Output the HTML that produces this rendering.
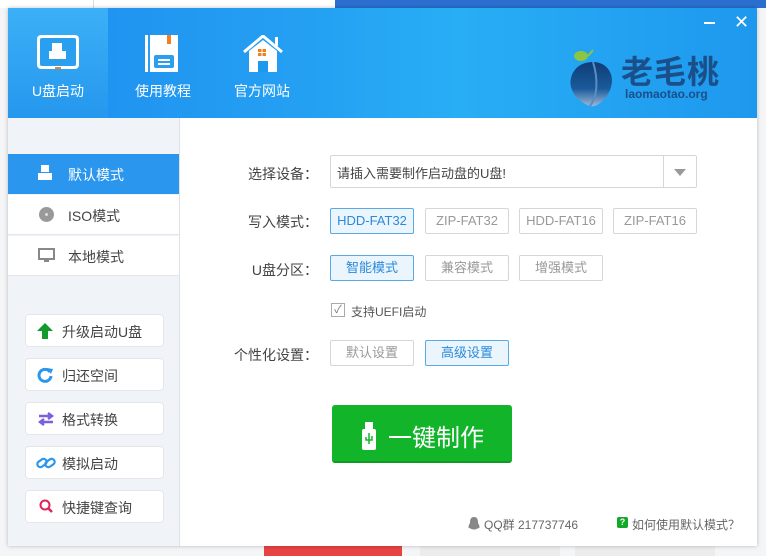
<!DOCTYPE html>
<html><head><meta charset="utf-8"><style>
*{margin:0;padding:0;box-sizing:border-box}
body{width:766px;height:556px;overflow:hidden;background:#f4f5f7;font-family:"Liberation Sans","Noto Sans CJK SC",sans-serif;position:relative;color:#333}
.abs{position:absolute}
#win{left:8px;top:8px;width:749px;height:538px;background:#fff;box-shadow:0 0 4px rgba(0,0,0,.25)}
#hdr{left:0;top:0;width:749px;height:110px;background:linear-gradient(90deg,#1e8ef0 0%,#24a0f2 40%,#28aef5 60%,#1e98ee 100%)}
.tab{top:0;width:100px;height:110px;color:#fff;font-size:14px;text-align:center}
.tab span{position:absolute;left:0;width:100%;top:73px}
#side{left:0;top:110px;width:172px;height:428px;background:#f0f3f7;border-right:1px solid #dde2e8}
.mi{left:0;width:171px;height:40px;background:#fff;font-size:14px;color:#444;border-bottom:1px solid #e3e6ea}
.mi span{position:absolute;left:60px;top:11px}
.ab{left:17px;width:139px;height:33px;background:#fff;border:1px solid #e3e7ec;border-radius:4px;font-size:14px;color:#444}
.ab span{position:absolute;left:36px;top:7px}
.lbl{font-size:14px;color:#444;text-align:right;width:100px}
.btn{height:26px;width:84px;border:1px solid #d3d7dc;border-radius:2px;font-size:13px;color:#999;text-align:center;line-height:24px;background:#fff}
.sel{border-color:#5aaae6;background:#eaf5fd;color:#2b8ad8}
</style></head><body>
<div class="abs" style="left:0;top:0;width:766px;height:8px;background:#fff"></div>
<div class="abs" style="left:93px;top:0;width:1px;height:8px;background:#ddd"></div>
<div class="abs" style="left:335px;top:0;width:431px;height:8px;background:#2a6fd0"></div>
<div class="abs" style="left:264px;top:546px;width:138px;height:10px;background:#e84343"></div>
<div class="abs" style="left:420px;top:546px;width:140px;height:10px;background:#ececec"></div>
<div class="abs" style="left:575px;top:546px;width:140px;height:10px;background:#ececec"></div>
<div id="win" class="abs">
 <div id="hdr" class="abs">
  <div class="tab abs" style="left:0;background:linear-gradient(180deg,#3cb0f6,#2597ee)">
   <svg class="abs" style="left:28px;top:26px" width="44" height="38" viewBox="0 0 44 38"><rect x="1" y="1" width="42" height="34" rx="4" fill="#fff"/><rect x="4" y="4" width="36" height="28" rx="2" fill="#2a9ff0"/><rect x="16" y="9" width="10" height="8" fill="#fff"/><rect x="13" y="17" width="17" height="8" fill="#fff"/><rect x="19" y="33" width="6" height="2" fill="#f08020"/></svg>
   <span>U盘启动</span></div>
  <div class="tab abs" style="left:105px">
   <svg class="abs" style="left:32px;top:27px" width="34" height="38" viewBox="0 0 34 38"><rect x="0" y="0" width="33" height="37" fill="#fff"/><rect x="3" y="0" width="2" height="37" fill="#2a9ff0"/><rect x="22" y="0" width="4" height="9" fill="#f08020"/><rect x="9" y="20" width="20" height="13" rx="2" fill="#2a9ff0"/><rect x="13" y="24" width="12" height="2" fill="#fff"/><rect x="13" y="28" width="12" height="2" fill="#fff"/></svg>
   <span>使用教程</span></div>
  <div class="tab abs" style="left:204px">
   <svg class="abs" style="left:30px;top:27px" width="42" height="38" viewBox="0 0 42 38"><path d="M2 17 L21 1 L40 17" stroke="#fff" stroke-width="3" fill="none"/><rect x="33" y="2" width="3" height="9" fill="#fff"/><path d="M7 16 L21 5 L35 16 V37 H7Z" fill="#fff"/><rect x="16" y="26" width="10" height="11" fill="#1e98ee"/><rect x="16" y="14" width="8" height="7" fill="#f08020"/><path d="M20 14V21M16 17.5H24" stroke="#fff"/></svg>
   <span>官方网站</span></div>
  <div class="abs" style="left:696px;top:14px;width:11px;height:2px;background:#fff"></div>
  <div class="abs" style="left:726px;top:4px;color:#fff;font-size:18px">✕</div>
  <svg class="abs" style="left:560px;top:40px" width="50" height="62" viewBox="0 0 50 62"><defs><linearGradient id="g" x1="0" y1="0" x2="0" y2="1"><stop offset="0" stop-color="#0e3d78"/><stop offset=".6" stop-color="#1a5a9a"/><stop offset="1" stop-color="#9cb8d8"/></linearGradient></defs><ellipse cx="13" cy="8" rx="7" ry="5" fill="#8cc63f"/><path d="M20 8 L25 2" stroke="#8cc63f" stroke-width="2"/><path d="M25 14 C40 14 48 28 42 42 C38 52 28 60 22 58 C10 54 0 42 3 30 C6 18 16 14 25 14Z" fill="url(#g)"/><path d="M22 58 C30 48 30 30 25 14" stroke="#5b8dc0" stroke-width="2" fill="none"/></svg>
  <div class="abs" style="left:613px;top:47px;color:#1a4f8a;font-size:32px;line-height:34px;font-weight:bold;letter-spacing:1px">老毛桃</div>
  <div class="abs" style="left:617px;top:80px;color:#1a4f8a;font-size:12px;line-height:13px;font-weight:bold">laomaotao.org</div>
 </div>
 <div id="side" class="abs">
  <div class="mi abs" style="top:36px;background:#2a96ee;color:#fff;border:none"><svg class="abs" style="left:29px;top:11px" width="16" height="16"><rect x="4" y="0" width="8" height="7" fill="#fff"/><rect x="1" y="8" width="14" height="7" fill="#fff"/></svg><span>默认模式</span></div>
  <div class="abs" style="left:166px;top:50px;width:0;height:0;border:6px solid transparent;border-right-color:#fff"></div>
  <div class="mi abs" style="top:77px"><div class="abs" style="left:31px;top:12px;width:15px;height:15px;border-radius:50%;background:#999"></div><div class="abs" style="left:37px;top:18px;width:3px;height:3px;border-radius:50%;background:#ddd"></div><span>ISO模式</span></div>
  <div class="mi abs" style="top:118px"><div class="abs" style="left:30px;top:12px;width:17px;height:12px;border:2px solid #888"></div><div class="abs" style="left:36px;top:24px;width:5px;height:2px;background:#888"></div><span>本地模式</span></div>
  <div class="ab abs" style="top:196px"><svg class="abs" style="left:11px;top:8px" width="16" height="16"><path d="M8 0L16 8H11V16H5V8H0Z" fill="#139a2c"/></svg><span>升级启动U盘</span></div>
  <div class="ab abs" style="top:240px"><svg class="abs" style="left:11px;top:8px" width="16" height="16"><path d="M13 5A6 6 0 1 0 14 9" stroke="#2a96ee" stroke-width="3" fill="none"/><path d="M10 1L16 2L14 7Z" fill="#2a96ee"/></svg><span>归还空间</span></div>
  <div class="ab abs" style="top:284px"><svg class="abs" style="left:12px;top:8px" width="16" height="16"><path d="M1 5H13M10 2L14 5L10 8M15 11H3M6 8L2 11L6 14" stroke="#7b5fe0" stroke-width="2.4" fill="none"/></svg><span>格式转换</span></div>
  <div class="ab abs" style="top:328px"><svg class="abs" style="left:10px;top:8px" width="20" height="16"><rect x="1" y="5" width="10" height="6" rx="3" transform="rotate(-35 6 8)" stroke="#2a96ee" stroke-width="2.2" fill="none"/><rect x="9" y="5" width="10" height="6" rx="3" transform="rotate(-35 14 8)" stroke="#2a96ee" stroke-width="2.2" fill="none"/></svg><span>模拟启动</span></div>
  <div class="ab abs" style="top:372px"><svg class="abs" style="left:13px;top:8px" width="16" height="16"><circle cx="6" cy="6" r="4.5" stroke="#e0245a" stroke-width="2" fill="none"/><path d="M9 9L13 13" stroke="#e0245a" stroke-width="2.5"/></svg><span>快捷键查询</span></div>
 </div>
 <div class="lbl abs" style="left:210px;top:156px">选择设备：</div>
 <div class="abs" style="left:322px;top:147px;width:367px;height:33px;border:1px solid #d3d7dc;border-radius:2px;font-size:13px;color:#444;padding:7px 6px">请插入需要制作启动盘的U盘!</div>
 <div class="abs" style="left:655px;top:148px;width:1px;height:31px;background:#d3d7dc"></div>
 <div class="abs" style="left:666px;top:161px;border:6px solid transparent;border-top:7px solid #999"></div>
 <div class="lbl abs" style="left:210px;top:204px">写入模式：</div>
 <div class="btn sel abs" style="left:322px;top:200px">HDD-FAT32</div>
 <div class="btn abs" style="left:417px;top:200px">ZIP-FAT32</div>
 <div class="btn abs" style="left:511px;top:200px">HDD-FAT16</div>
 <div class="btn abs" style="left:605px;top:200px">ZIP-FAT16</div>
 <div class="lbl abs" style="left:210px;top:252px">U盘分区：</div>
 <div class="btn sel abs" style="left:322px;top:247px">智能模式</div>
 <div class="btn abs" style="left:417px;top:247px">兼容模式</div>
 <div class="btn abs" style="left:511px;top:247px">增强模式</div>
 <div class="abs" style="left:323px;top:295px;width:14px;height:14px;border:1px solid #aaa;color:#777;font-size:11px;line-height:12px;text-align:center">✓</div>
 <div class="abs" style="left:343px;top:295px;font-size:12px;color:#555">支持UEFI启动</div>
 <div class="lbl abs" style="left:210px;top:337px">个性化设置：</div>
 <div class="btn abs" style="left:322px;top:332px">默认设置</div>
 <div class="btn sel abs" style="left:417px;top:332px">高级设置</div>
 <div class="abs" style="left:324px;top:397px;width:180px;height:58px;background:#12b52a;border-radius:3px;border-bottom:2px solid #0f9a22"></div>
 <svg class="abs" style="left:354px;top:414px" width="14" height="28"><rect x="3" y="0" width="8" height="7" fill="#fff"/><rect x="0" y="7" width="14" height="21" rx="2" fill="#fff"/><path d="M7 11V22M4 15V18H10V14" stroke="#12b52a" stroke-width="1.5" fill="none"/></svg>
 <div class="abs" style="left:380px;top:410px;font-size:24px;color:#fff">一键制作</div>
 <svg class="abs" style="left:459px;top:509px" width="14" height="14"><path d="M7 0C3 0 3 4 3 6C1 9 1 12 3 11C4 13 10 13 11 11C13 12 13 9 11 6C11 4 11 0 7 0Z" fill="#888"/></svg>
 <div class="abs" style="left:476px;top:508px;font-size:12px;color:#666">QQ群 217737746</div>
 <div class="abs" style="left:609px;top:509px;width:11px;height:11px;background:#12a82a;border-radius:2px;color:#fff;font-size:9px;text-align:center;line-height:11px;font-weight:bold">?</div>
 <div class="abs" style="left:624px;top:508px;font-size:12px;color:#666">如何使用默认模式？</div>
</div>
</body></html>
